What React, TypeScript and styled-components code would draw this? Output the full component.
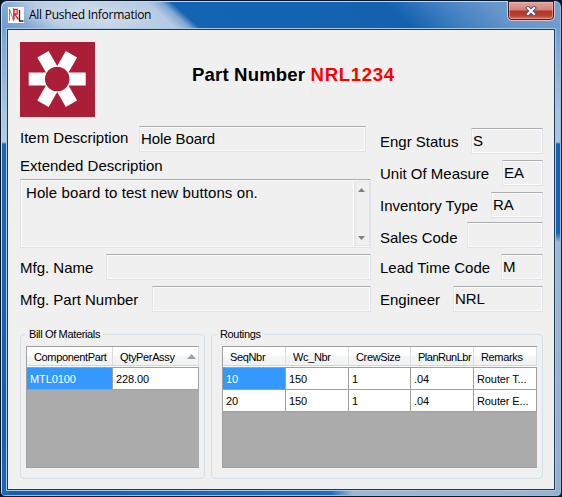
import React from "react";
import styled, { createGlobalStyle } from "styled-components";

const GlobalStyle = createGlobalStyle`
  * { box-sizing: border-box; }
  body { margin: 0; background: #0a1626; overflow: hidden; }
`;

const sans = `"Liberation Sans", Arial, sans-serif`;

const Frame = styled.div`
  width: 562px;
  height: 497px;
  display: flex;
  flex-direction: column;
  padding: 1px 6px 6px;
  border: 1px solid #07172b;
  border-radius: 7px 7px 5px 5px;
  box-shadow: inset 1px 1px 0 #c3d8ee, inset -1px -1px 0 #8fc2e8;
  font-family: ${sans};
  color: #000;
  background:
    linear-gradient(180deg, #76a2d2 0, #a9c2de 80px, #b7cce3 114px, #1b68b5 116px, #1460b0 400px, #1d6ab8 100%) left 27px / 8px 470px no-repeat,
    linear-gradient(180deg, #6f9fd3 0, #a9c4e0 85px, #a9c4e0 114px, #1463b3 116px, #1463b3 205px, #9db8d4 214px, #96aecb 100%) right 27px / 8px 470px no-repeat,
    linear-gradient(90deg, #1460b0 0, #1d6fbd 330px, #9db8d4 352px, #9ab3cf 100%) left bottom / 100% 8px no-repeat,
    linear-gradient(42deg, #6c9bd1 0, #83a9d6 20px, #b9cde3 42px, #c8d6e8 75px, #b4c9e2 118px, #82a8d3 127px, #1463b4 134px, #1562b2 240px, #1260ae 275px, #3f7fc1 310px, #6695ca 345px, #76a2d3 100%) left top / 100% 28px no-repeat,
    #0f5dac;
`;

const TitleBar = styled.header`
  height: 27px;
  flex: none;
  display: flex;
  align-items: flex-start;
  justify-content: space-between;
`;

const TitleGroup = styled.div`
  display: flex;
  align-items: center;
  gap: 5px;
  padding: 5px 0 0 1px;
`;

const Title = styled.h1`
  margin: 0;
  font: 400 12px/16px "Open Sans", "Noto Sans", sans-serif;
  letter-spacing: -0.27px;
  white-space: nowrap;
  text-shadow: 0 0 8px #fff;
`;

const CloseButton = styled.button`
  width: 48px;
  height: 20px;
  margin: -1px 0 0;
  padding: 0;
  display: grid;
  place-items: center;
  border: 1px solid #d9c5cf;
  border-top: 0;
  border-radius: 0 0 5px 5px;
  box-shadow: inset 0 0 0 1px #4d1b26, inset 0 0 0 2px rgba(255, 190, 180, 0.55);
  background: linear-gradient(#e5a9a3 0, #d0827a 48%, #b33325 52%, #b8402e 75%, #d4806a 100%);
`;

const Client = styled.main`
  flex: 1;
  min-height: 0;
  display: flex;
  flex-direction: column;
  padding: 12px 11px 9px 12px;
  border: 1px solid #1b3b5d;
  outline: 1px solid #a9c8e4;
  background: #f0f0f0;
`;

const Banner = styled.div`
  display: flex;
  flex: none;
  align-items: flex-start;
  gap: 97px;
  height: 84px;
`;

const PartHeading = styled.h2`
  margin: 21px 0 0;
  font: 700 18.6px/24px ${sans};
  letter-spacing: 0.15px;
  white-space: nowrap;
`;

const PartNumber = styled.span`
  color: #ff0000;
  letter-spacing: 0.65px;
`;

const FormColumns = styled.div`
  display: grid;
  flex: none;
  grid-template-columns: 351px 163px;
  column-gap: 9px;
  height: 202px;
`;

const Column = styled.div<{ $top?: number }>`
  display: flex;
  flex-direction: column;
  padding-top: ${(p) => p.$top ?? 0}px;
`;

const FieldRow = styled.div<{ $after?: number; $end?: number }>`
  display: flex;
  flex: none;
  height: 26px;
  margin: 0 ${(p) => p.$end ?? 0}px ${(p) => p.$after ?? 6}px 0;
`;

const Label = styled.label<{ $width: number; $drop?: number }>`
  flex: none;
  width: ${(p) => p.$width}px;
  padding-top: ${(p) => p.$drop ?? 5}px;
  font-size: 15px;
  line-height: 18px;
  white-space: nowrap;
`;

const Value = styled.div`
  flex: 1;
  min-width: 0;
  padding: 3px 0 0 1px;
  border: 1px solid #e2e3ea;
  border-top-color: #abadb3;
  border-radius: 1px;
  box-shadow: inset 0 0 0 1px #fafafa;
  font-size: 15px;
  line-height: 18px;
  letter-spacing: -0.1px;
  white-space: nowrap;
`;

const ExtendedLabel = styled.div`
  flex: none;
  height: 27px;
  padding-top: 5px;
  font-size: 15px;
  line-height: 18px;
`;

const Memo = styled.div`
  display: flex;
  flex: none;
  justify-content: space-between;
  height: 69px;
  margin-bottom: 6px;
  border: 1px solid #e2e3ea;
  border-top-color: #abadb3;
  box-shadow: inset 0 0 0 1px #fafafa;
`;

const MemoText = styled.p`
  margin: 4px 0 0 5px;
  font-size: 15px;
  line-height: 18px;
  letter-spacing: 0.1px;
`;

const ScrollBar = styled.div`
  width: 17px;
  margin: 1px 0;
  padding: 6px 0 5px;
  display: flex;
  flex-direction: column;
  align-items: center;
  justify-content: space-between;
  border: 1px solid #e4e4e4;
  border-left-color: #fff;
  background: linear-gradient(90deg, #e4e4e4, #f0f0f0 4px);
`;

const Groups = styled.div`
  display: grid;
  flex: none;
  grid-template-columns: 185px 332px;
  column-gap: 6px;
  height: 151px;
`;

const GroupBox = styled.fieldset`
  min-width: 0;
  height: 151px;
  margin: 0;
  padding: 6px 5px 0;
  border: 1px solid #d5dfe5;
  border-radius: 4px;
`;

const Legend = styled.legend`
  height: 12px;
  padding: 0 3px;
  font-size: 11px;
  line-height: 12px;
  letter-spacing: -0.35px;
`;

const DataGrid = styled.div<{ $cols: string; $left?: number }>`
  display: grid;
  grid-template-columns: ${(p) => p.$cols};
  grid-template-rows: 20px;
  grid-auto-rows: 22px;
  height: 122px;
  margin-left: ${(p) => p.$left ?? 0}px;
  border: 1px solid #a0a0a0;
  border-right: 0;
  background: #ababab;
  font-size: 11px;
`;

const HeaderCell = styled.div`
  display: flex;
  align-items: center;
  justify-content: space-between;
  margin-bottom: 1px;
  padding: 1px 2px 0 7px;
  border-right: 1px solid #dcdde0;
  border-bottom: 1px solid #d5d5d5;
  background: linear-gradient(#fff 45%, #f4f5f7 55%, #f1f2f4);
  box-shadow: 0 1px 0 #fff;
  letter-spacing: -0.35px;
  white-space: nowrap;
`;

const HeaderText = styled.span<{ $tight?: boolean }>`
  letter-spacing: ${(p) => (p.$tight ? "-0.5px" : "inherit")};
`;

const Cell = styled.div<{ $selected?: boolean }>`
  padding: 0 0 0 3px;
  overflow: hidden;
  border: solid #a0a0a0;
  border-width: 1px 1px 0 0;
  box-shadow: 0 1px 0 #a0a0a0;
  background: ${(p) => (p.$selected ? "#3399ff" : "#fff")};
  color: ${(p) => (p.$selected ? "#fff" : "#000")};
  line-height: 22px;
  letter-spacing: -0.1px;
  white-space: nowrap;
`;

const AppIcon = () => (
  <svg width="16" height="16" viewBox="0 0 16 16">
    <rect width="16" height="16" fill="#fff" />
    <path d="M1.5 14V2L5.5 14V1" fill="none" stroke="#888" strokeWidth="1" />
    <path d="M6 12.500V2.500H9.200V7H6.500L10.500 12.500" fill="none" stroke="#e02030" strokeWidth="1.300" />
    <path d="M11.500 3V14H15.500" fill="none" stroke="#222" strokeWidth="1.300" />
  </svg>
);

const Logo = () => (
  <svg width="75" height="75" viewBox="0 0 75 75">
    <rect width="75" height="75" fill="#aa1e37" />
    <g fill="#fff" transform="translate(37.200 37)">
      {[0, 60, 120, 180, 240, 300].map((a) => (
        <rect key={a} x="9" y="-6.500" width="19.500" height="13" transform={`rotate(${a})`} />
      ))}
    </g>
    <circle cx="37.200" cy="37" r="12.300" fill="#aa1e37" />
  </svg>
);

const CloseGlyph = () => (
  <svg width="12" height="10" viewBox="0 0 12 10">
    <path d="M3 2L9 8M9 2L3 8" stroke="#4a5066" strokeWidth="4" strokeLinecap="square" />
    <path d="M3 2L9 8M9 2L3 8" stroke="#f4f4f6" strokeWidth="2.200" strokeLinecap="square" />
  </svg>
);

const Arrow = ({ down }: { down?: boolean }) => (
  <svg width="7" height="4" viewBox="0 0 7 4">
    <path d={down ? "M0 0H7L3.5 4Z" : "M0 4H7L3.5 0Z"} fill="#808080" />
  </svg>
);

const SortArrow = () => (
  <svg width="9" height="5" viewBox="0 0 9 5">
    <path d="M0 5H9L4.500 0Z" fill="#a2a2a2" />
  </svg>
);

const codes = [
  { label: "Engr Status", value: "S", width: 91, drop: 5, after: 6 },
  { label: "Unit Of Measure", value: "EA", width: 122, drop: 5, after: 6 },
  { label: "Inventory Type", value: "RA", width: 111, drop: 5, after: 4 },
  { label: "Sales Code", value: "", width: 87, drop: 7, after: 6 },
  { label: "Lead Time Code", value: "M", width: 121, drop: 5, after: 6 },
  { label: "Engineer", value: "NRL", width: 73, drop: 5, after: 0 },
];

const routingHeads = ["SeqNbr", "Wc_Nbr", "CrewSize", "PlanRunLbr", "Remarks"];
const routingRows = [
  ["10", "150", "1", ".04", "Router T..."],
  ["20", "150", "1", ".04", "Router E..."],
];

export default function App() {
  return (
    <>
      <GlobalStyle />
      <Frame>
        <TitleBar>
          <TitleGroup>
            <AppIcon />
            <Title>All Pushed Information</Title>
          </TitleGroup>
          <CloseButton aria-label="Close">
            <CloseGlyph />
          </CloseButton>
        </TitleBar>
        <Client>
          <Banner>
            <Logo />
            <PartHeading>
              Part Number <PartNumber>NRL1234</PartNumber>
            </PartHeading>
          </Banner>
          <FormColumns>
            <Column>
              <FieldRow $after={0} $end={5}>
                <Label $width={119} $drop={3}>Item Description</Label>
                <Value>Hole Board</Value>
              </FieldRow>
              <ExtendedLabel>Extended Description</ExtendedLabel>
              <Memo>
                <MemoText>Hole board to test new buttons on.</MemoText>
                <ScrollBar>
                  <Arrow />
                  <Arrow down />
                </ScrollBar>
              </Memo>
              <FieldRow>
                <Label $width={86}>Mfg. Name</Label>
                <Value />
              </FieldRow>
              <FieldRow $after={0}>
                <Label $width={132}>Mfg. Part Number</Label>
                <Value />
              </FieldRow>
            </Column>
            <Column $top={2}>
              {codes.map((c) => (
                <FieldRow key={c.label} $after={c.after}>
                  <Label $width={c.width} $drop={c.drop}>{c.label}</Label>
                  <Value>{c.value}</Value>
                </FieldRow>
              ))}
            </Column>
          </FormColumns>
          <Groups>
            <GroupBox>
              <Legend>Bill Of Materials</Legend>
              <DataGrid $cols="86px 86px">
                <HeaderCell><HeaderText>ComponentPart</HeaderText></HeaderCell>
                <HeaderCell><HeaderText>QtyPerAssy</HeaderText><SortArrow /></HeaderCell>
                <Cell $selected>MTL0100</Cell>
                <Cell>228.00</Cell>
              </DataGrid>
            </GroupBox>
            <GroupBox>
              <Legend>Routings</Legend>
              <DataGrid $cols="63px 63px 62px 63px 63px" $left={5}>
                {routingHeads.map((h) => (
                  <HeaderCell key={h}>
                    <HeaderText $tight={h.length > 9}>{h}</HeaderText>
                  </HeaderCell>
                ))}
                {routingRows.map((row, r) =>
                  row.map((text, c) => (
                    <Cell key={`${r}-${c}`} $selected={r === 0 && c === 0}>{text}</Cell>
                  ))
                )}
              </DataGrid>
            </GroupBox>
          </Groups>
        </Client>
      </Frame>
    </>
  );
}
